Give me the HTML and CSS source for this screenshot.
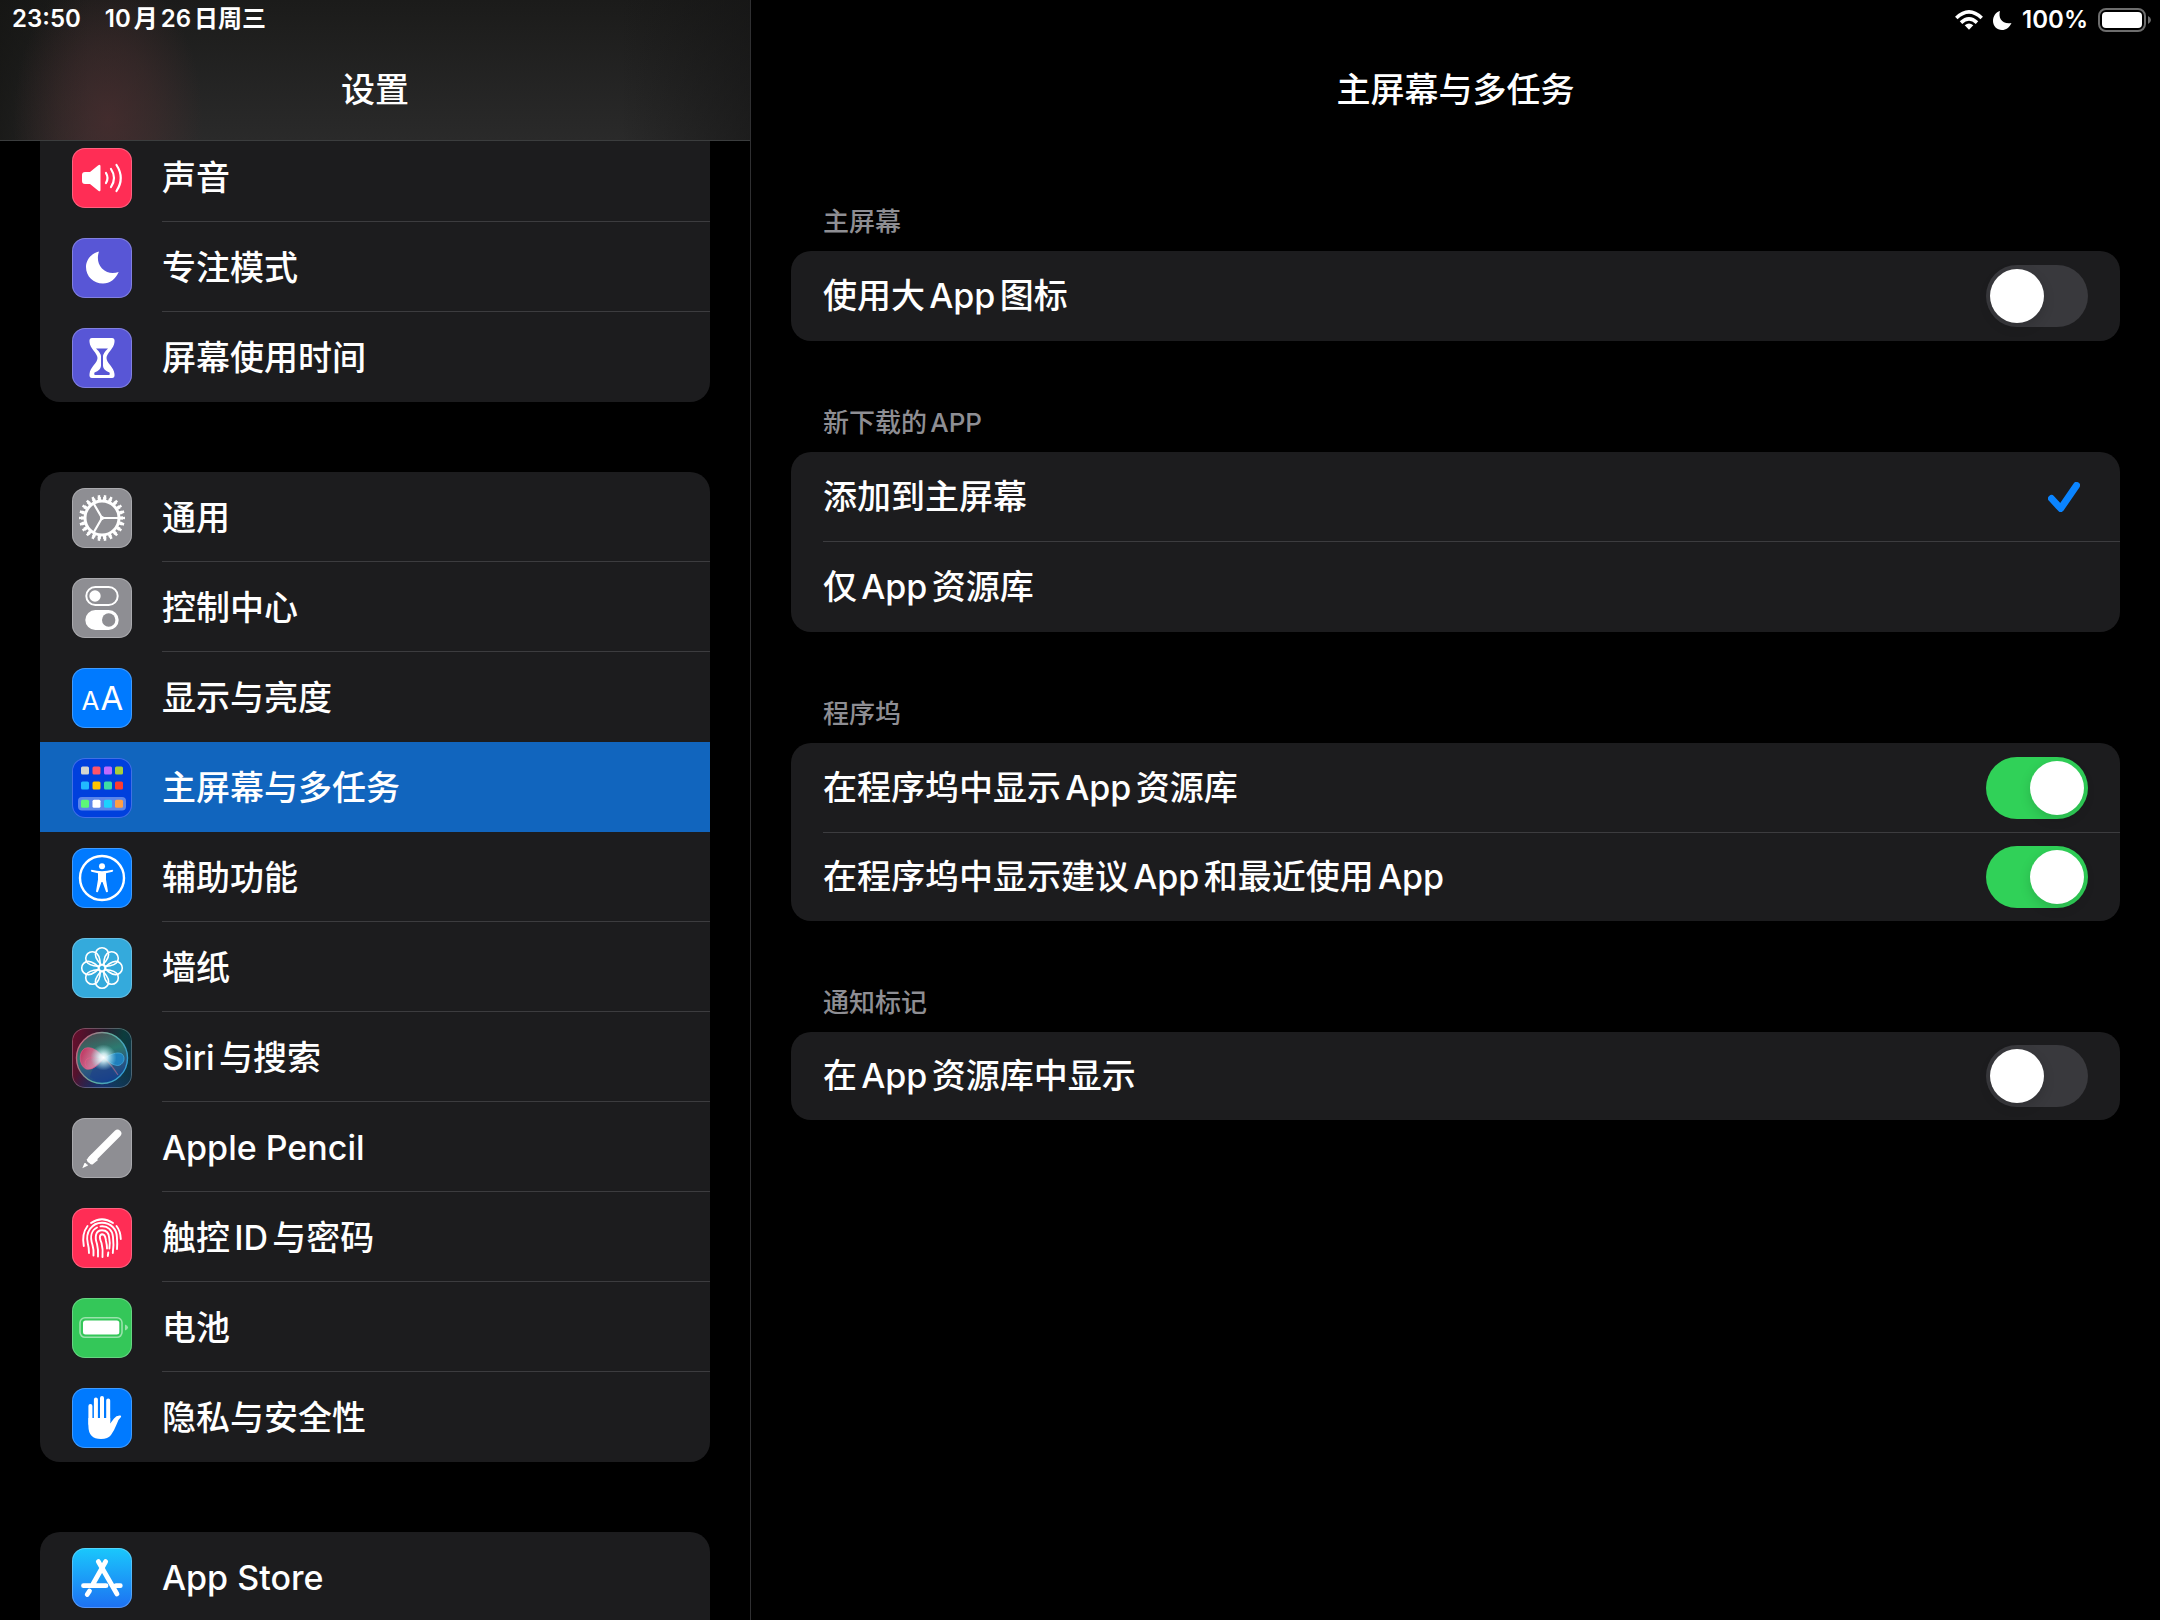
FILE: index.html
```html
<!DOCTYPE html>
<html lang="zh-CN">
<head>
  <meta charset="UTF-8">
  <meta name="viewport" content="width=device-width, initial-scale=1">
  <title>设置</title>
  <link rel="stylesheet" href="styles.css">
</head>
<body>
  <aside class="sidebar">
    <header class="sidebar-header">
      <div class="status-bar">
        <span>23:50</span>
        <span>10月26日周三</span>
      </div>
      <h1 class="title">设置</h1>
    </header>

    <nav class="menu">
      <div class="group cut-top">
        <a class="item" href="#">
          <svg class="icon red" viewBox="0 0 60 60">
            <path fill="#fff" d="M10 27q0-3 3-3h5l8.300-6.700q2.200-1.500 2.200 1v23.400q0 2.500-2.200 1L18 36h-5q-3 0-3-3z"/>
            <path class="line" stroke-width="2.200" d="M34 25q3 5 0 10M39 21q6 9 0 18M44.500 17q8.500 13 0 26"/>
          </svg>
          <span class="label">声音</span>
        </a>
        <a class="item" href="#">
          <svg class="icon purple" viewBox="0 0 60 60">
            <path fill="#fff" d="M27 13.500C25 19 25.500 26 30 30.500C35 35.500 41 36 46.700 34C43.500 41 38 45.500 31 45.500C21.500 45.500 14 38.500 14 29C14 22 19 15.500 27 13.500z"/>
          </svg>
          <span class="label">专注模式</span>
        </a>
        <a class="item" href="#">
          <svg class="icon purple" viewBox="0 0 60 60">
            <path fill="#fff" d="M20 10h20q3 0 2.500 4C42 21 34.500 25 34.500 30S42 39 42.500 46q.5 4-2.500 4H20q-3 0-2.500-4C18 39 25.500 35 25.500 30S18 21 17.500 14q-.5-4 2.500-4z"/>
            <path fill="#5856d6" d="M24 20.500h12Q31.200 25 31 28v10q.3 4 6.500 6.500q1 2.300-.5 2.500H23q-1.500-.2-.5-2.500Q28.700 42 29 38V28Q28.800 25 24 20.500z"/>
          </svg>
          <span class="label">屏幕使用时间</span>
        </a>
      </div>

      <div class="group">
        <a class="item" href="#">
          <svg class="icon gray" viewBox="0 0 60 60">
            <g fill="none" stroke="#fff">
              <circle cx="30" cy="30" r="17" stroke-width="3"/>
              <circle cx="30" cy="30" r="19.500" stroke-width="3" pathLength="220" stroke-dasharray="6 4" stroke-dashoffset="3"/>
              <circle cx="30" cy="30" r="21.500" stroke-width="3" pathLength="220" stroke-dasharray="4 6" stroke-dashoffset="2"/>
              <path stroke-width="2.200" d="M47 30H30L21.500 15.300M30 30L21.500 44.700"/>
            </g>
            <circle cx="30" cy="30" r="2" fill="#fff"/>
          </svg>
          <span class="label">通用</span>
        </a>
        <a class="item" href="#">
          <svg class="icon gray" viewBox="0 0 60 60">
            <rect x="14.300" y="9" width="31.400" height="18" rx="9" fill="none" stroke="#fff" stroke-width="2"/>
            <circle cx="23" cy="18" r="5.700" fill="#fff"/>
            <rect x="13.300" y="32" width="33.400" height="20" rx="10" fill="#fff"/>
            <circle cx="36.700" cy="42" r="6.700" fill="#8e8e93"/>
          </svg>
          <span class="label">控制中心</span>
        </a>
        <a class="item no-line" href="#">
          <svg class="icon blue" viewBox="0 0 60 60">
            <text class="icon-text" x="9.500" y="42" font-size="26">A</text>
            <text class="icon-text" x="28.500" y="42" font-size="33">A</text>
          </svg>
          <span class="label">显示与亮度</span>
        </a>
        <a class="item selected no-line" href="#" aria-current="page">
          <svg class="icon home" viewBox="0 0 60 60">
            <rect x="6" y="39" width="48" height="13.500" rx="4" fill="#5b86ea"/>
            <rect x="9" y="8.500" width="8" height="8" rx="1.500" fill="#d5d5cf"/>
            <rect x="20.500" y="8.500" width="8" height="8" rx="1.500" fill="#ff5468"/>
            <rect x="32" y="8.500" width="8" height="8" rx="1.500" fill="#bf6bff"/>
            <rect x="43" y="8.500" width="8" height="8" rx="1.500" fill="#a9cf38"/>
            <rect x="9" y="23.500" width="8" height="8" rx="1.500" fill="#21b8ff"/>
            <rect x="20.500" y="23.500" width="8" height="8" rx="1.500" fill="#ffc400"/>
            <rect x="32" y="23.500" width="8" height="8" rx="1.500" fill="#3ddba5"/>
            <rect x="43" y="23.500" width="8" height="8" rx="1.500" fill="#ff3b30"/>
            <rect x="9" y="41.700" width="8" height="8" rx="1.500" fill="#5df777"/>
            <rect x="20.500" y="41.700" width="8" height="8" rx="1.500" fill="#fff"/>
            <rect x="32" y="41.700" width="8" height="8" rx="1.500" fill="#1cd2ff"/>
            <rect x="43" y="41.700" width="8" height="8" rx="1.500" fill="#ff9f45"/>
          </svg>
          <span class="label">主屏幕与多任务</span>
        </a>
        <a class="item" href="#">
          <svg class="icon blue" viewBox="0 0 60 60">
            <circle class="line" cx="30" cy="30" r="22" stroke-width="2.400"/>
            <circle cx="30" cy="18.300" r="3" fill="#fff"/>
            <path fill="#fff" d="M19.500 21.800Q30 24.500 40.500 21.800q1.500.8 0 2L34 25.300v6.200l2 12q-.8 1.500-2 .3L30.500 34h-1L26 43.800q-1.200 1.200-2-.3l2-12v-6.200l-6.500-1.500q-1.500-1.200 0-2z"/>
          </svg>
          <span class="label">辅助功能</span>
        </a>
        <a class="item" href="#">
          <svg class="icon cyan" viewBox="0 0 60 60">
            <defs>
              <path id="petal" d="M30 27C27.500 25.500 23.400 20.500 23.400 16.300A6.600 6.600 0 0 1 36.600 16.300C36.600 20.500 32.500 25.500 30 27z"/>
            </defs>
            <g fill="none" stroke="#fff" stroke-width="1.600">
              <use href="#petal"/>
              <use href="#petal" transform="rotate(45 30 30)"/>
              <use href="#petal" transform="rotate(90 30 30)"/>
              <use href="#petal" transform="rotate(135 30 30)"/>
              <use href="#petal" transform="rotate(180 30 30)"/>
              <use href="#petal" transform="rotate(225 30 30)"/>
              <use href="#petal" transform="rotate(270 30 30)"/>
              <use href="#petal" transform="rotate(315 30 30)"/>
              <circle cx="30" cy="30" r="3.300"/>
            </g>
          </svg>
          <span class="label">墙纸</span>
        </a>
        <a class="item" href="#">
          <svg class="icon siri" viewBox="0 0 60 60">
            <defs>
              <linearGradient id="ring" x1="0" y1="0.300" x2="1" y2="0.700">
                <stop offset="0" stop-color="#c8607c"/>
                <stop offset="0.500" stop-color="#5fae9c"/>
                <stop offset="1" stop-color="#2f9bd8"/>
              </linearGradient>
              <linearGradient id="orb" x1="0.300" y1="0" x2="0.600" y2="1">
                <stop offset="0" stop-color="#4a4a50"/>
                <stop offset="0.400" stop-color="#2c7a70"/>
                <stop offset="0.700" stop-color="#2c5680"/>
                <stop offset="1" stop-color="#0e3f8c"/>
              </linearGradient>
              <linearGradient id="pink" x1="0" y1="0" x2="1" y2="0.400">
                <stop offset="0" stop-color="#d81e55"/>
                <stop offset="1" stop-color="#e8a8c0"/>
              </linearGradient>
              <radialGradient id="glow">
                <stop offset="0" stop-color="#fff"/>
                <stop offset="0.300" stop-color="#e6fdff" stop-opacity="0.850"/>
                <stop offset="1" stop-color="#9fe9f0" stop-opacity="0"/>
              </radialGradient>
            </defs>
            <circle cx="30" cy="30" r="25.500" fill="url(#orb)" stroke="url(#ring)" stroke-width="1.400"/>
            <path fill="#1d3f8a" fill-opacity="0.600" d="M30 32C24 34 19 43 18 49Q31 58 43 48C41 40 36 34 30 32z"/>
            <path fill="url(#pink)" fill-opacity="0.850" stroke="#f05a8a" stroke-width="0.600" d="M32 30C27 23 19 17.500 12.500 20.500C6 25 7 37.500 14 41C21 43 27 35 32 30z"/>
            <path fill="none" stroke="#f05a8a" stroke-width="0.700" stroke-opacity="0.800" d="M31 31C24 31 20 28 15 31C11 35 14 40 18 40.500C24 40 28 35 31 31z"/>
            <path fill="#1f86c8" fill-opacity="0.850" stroke="#49bdf0" stroke-width="0.600" d="M32 30C38 27 45 23 50 26C54.500 30 51 37.500 45.500 37.500C39 37 36 32 32 30z"/>
            <path fill="none" stroke="#c06a94" stroke-width="1.200" stroke-opacity="0.600" d="M32 30Q39 36 46 47"/>
            <circle cx="31.500" cy="29.500" r="13" fill="url(#glow)"/>
          </svg>
          <span class="label">Siri与搜索</span>
        </a>
        <a class="item" href="#">
          <svg class="icon gray" viewBox="0 0 60 60">
            <path fill="none" stroke="#fff" stroke-width="7.600" stroke-linecap="round" d="M45.500 15.500L20 41"/>
            <path fill="#fff" d="M14.600 41.500L20 36l6 6-5.500 4.500q-2 .2-2.500-.8t-1.500-1.200-1.900-3z"/>
            <path fill="#fff" d="M10.300 50.300L12.500 45q1.800-.2 2 1.200 1.200 0 1.500 1.300z"/>
          </svg>
          <span class="label">Apple Pencil</span>
        </a>
        <a class="item" href="#">
          <svg class="icon red" viewBox="0 0 60 60">
            <g class="line" stroke-width="1.900">
              <path d="M19 15Q30 7.500 41 15"/>
              <path d="M15.500 18Q9.500 26 11.800 38"/>
              <path d="M44.500 18Q48.500 23 48.800 31"/>
              <path d="M17 45Q17 40 15.800 35.500C13 24 20 14.700 30 14.700C39 14.700 44.700 21.500 44.900 29Q45.500 36 45 41"/>
              <path d="M21.500 47.500Q22 42 20.500 37C17.500 28 20 22 25 19.500"/>
              <path d="M28.500 18.400C36 17.500 40.500 22.500 41 29Q42 37 40.800 45"/>
              <path d="M26 48.500Q26.500 42 25 36C22.500 29 23.500 22.300 30 22.300C35 22.300 37 26 37.200 30Q38.200 34 37.400 40.500"/>
              <path d="M30.500 49Q31.200 41 29.500 35C28 31.500 26.500 27 30 26.200C33.500 26 33.500 30 34 33Q35 37 35 40.500"/>
              <path d="M36.300 44.500L35.800 48"/>
            </g>
          </svg>
          <span class="label">触控ID与密码</span>
        </a>
        <a class="item" href="#">
          <svg class="icon green" viewBox="0 0 60 60">
            <rect x="8" y="19.800" width="42" height="19.500" rx="5" fill="none" stroke="#fff" stroke-opacity="0.500" stroke-width="1.600"/>
            <rect x="11" y="22.500" width="36.300" height="14" rx="2.500" fill="#fff"/>
            <path fill="#fff" fill-opacity="0.500" d="M53 26.500q3 1 3 3t-3 3z"/>
          </svg>
          <span class="label">电池</span>
        </a>
        <a class="item" href="#">
          <svg class="icon blue" viewBox="0 0 60 60">
            <g fill="none" stroke="#fff" stroke-linecap="round" stroke-width="4">
              <path d="M18.400 18V36M23.900 11.500V34M30 10V34M36.200 12.500V34"/>
            </g>
            <path fill="#fff" d="M16.400 30H38.200V35.500L42 30.500Q44.500 27 48.500 27.500Q49.700 28.200 48.800 29.200Q46.500 31 45 35.500Q42 43 39 47Q36 51 29 51Q16.400 51 16.400 38z"/>
          </svg>
          <span class="label">隐私与安全性</span>
        </a>
      </div>

      <div class="group cut-bottom">
        <a class="item" href="#">
          <svg class="icon store" viewBox="0 0 60 60">
            <g fill="none" stroke="#fff" stroke-width="4.800" stroke-linecap="round">
              <path d="M33.700 13.500L21 36M26.300 13.500L45 46M11.500 37.700H34M44 37.700H48.300M17.500 43L15.200 46.500"/>
            </g>
          </svg>
          <span class="label">App Store</span>
        </a>
      </div>
    </nav>
  </aside>

  <main class="content">
    <header>
      <div class="status-bar status-right">
        <svg class="wifi" viewBox="0 0 28 20">
          <g fill="none" stroke="#fff" stroke-width="3.600">
            <path d="M1.300 8Q14-4.200 26.700 8"/>
            <path d="M6 12.600Q14 5.200 22 12.600"/>
          </g>
          <path fill="#fff" d="M9.700 15.200Q14 11.700 18.300 15.200L14 19.700z"/>
        </svg>
        <svg class="moon" viewBox="0 0 19 19">
          <path fill="#fff" d="M7 0C5 7 9 13.500 18.500 12C16.500 16.500 13 19 9 19C4 19 0 15 0 10C0 5 3 1.200 7 0z"/>
        </svg>
        <span>100%</span>
        <svg class="battery" viewBox="0 0 54 24">
          <rect x="1" y="1" width="46" height="22" rx="7" fill="none" stroke="#6d6d6d" stroke-width="2"/>
          <rect x="4" y="4" width="40" height="16" rx="4" fill="#fff"/>
          <path fill="#6d6d6d" d="M50 8q3 1.500 3 4t-3 4z"/>
        </svg>
      </div>
      <h2 class="title">主屏幕与多任务</h2>
    </header>

    <section>
      <h3 class="section-title">主屏幕</h3>
      <div class="card">
        <div class="row">
          <label for="big-icons">使用大App图标</label>
          <input class="switch" type="checkbox" id="big-icons">
        </div>
      </div>
    </section>

    <section>
      <h3 class="section-title">新下载的APP</h3>
      <div class="card">
        <div class="row">
          <label for="add-home">添加到主屏幕</label>
          <input class="choice" type="radio" name="new-app" id="add-home" checked>
          <svg class="check" viewBox="0 0 32 30"><path d="M3.500 16.500L12.700 26.500L28.500 3.500"/></svg>
        </div>
        <div class="row">
          <label for="library-only">仅App资源库</label>
          <input class="choice" type="radio" name="new-app" id="library-only">
          <svg class="check" viewBox="0 0 32 30"><path d="M3.500 16.500L12.700 26.500L28.500 3.500"/></svg>
        </div>
      </div>
    </section>

    <section>
      <h3 class="section-title">程序坞</h3>
      <div class="card">
        <div class="row">
          <label for="dock-library">在程序坞中显示App资源库</label>
          <input class="switch" type="checkbox" id="dock-library" checked>
        </div>
        <div class="row compact">
          <label for="dock-recent">在程序坞中显示建议App和最近使用App</label>
          <input class="switch" type="checkbox" id="dock-recent" checked>
        </div>
      </div>
    </section>

    <section>
      <h3 class="section-title">通知标记</h3>
      <div class="card">
        <div class="row compact">
          <label for="badges">在App资源库中显示</label>
          <input class="switch" type="checkbox" id="badges">
        </div>
      </div>
    </section>
  </main>
</body>
</html>
```

FILE: styles.css
```css
* {
  box-sizing: border-box;
}

body, h1, h2, h3 {
  margin: 0;
  padding: 0;
}

body {
  display: flex;
  height: 100vh;
  overflow: hidden;
  background-color: #000;
  color: #fff;
  font-family: Inter, "Noto Sans CJK SC", sans-serif;
  font-size: 34px;
  font-weight: 500;
  text-autospace: normal;
}

a {
  color: inherit;
  text-decoration: none;
}

/* sidebar */

.sidebar {
  display: flex;
  flex-direction: column;
  flex: 0 0 751px;
  border-right: 1px solid #2f2f31;
}

.sidebar-header {
  flex: none;
  border-bottom: 1px solid #3b3d3e;
  background:
    radial-gradient(ellipse 95px 150px at 108px 120px, rgba(80, 46, 48, 0.65), rgba(76, 46, 47, 0.4) 50%, transparent),
    linear-gradient(to right, rgba(20, 20, 18, 0.7), transparent 90px, transparent 620px, rgba(20, 20, 20, 0.6)),
    linear-gradient(#1b1b1a, #2a2a2a);
}

.status-bar {
  display: flex;
  align-items: baseline;
  gap: 24px;
  height: 40px;
  padding: 0 12px;
  font-size: 24px;
  font-weight: 600;
  line-height: 38px;
}

.title {
  font-size: 34px;
  font-weight: 500;
  line-height: 100px;
  text-align: center;
}

.menu {
  flex: 1;
  overflow: hidden;
  padding: 0 40px;
}

.group {
  margin-bottom: 70px;
  border-radius: 20px;
  background-color: #1c1c1e;
  overflow: hidden;
}

/* scrolled partly under the header */
.cut-top {
  margin-top: -9px;
  border-radius: 0 0 20px 20px;
}

/* runs on below the window */
.cut-bottom {
  margin-bottom: 0;
  border-radius: 20px 20px 0 0;
}

.item {
  display: flex;
  align-items: center;
  gap: 30px;
  height: 90px;
  padding: 2px 0 0 32px;
}

.label {
  flex: 1;
  height: 88px;
  line-height: 88px;
  border-bottom: 1px solid #3c3c3f;
}

.item:last-child .label,
.no-line .label {
  border-bottom-color: transparent;
}

.selected {
  background-color: #1165be;
}

.icon {
  flex: none;
  width: 60px;
  height: 60px;
  border-radius: 13px;
  box-shadow: inset 0 0 0 1px rgba(255, 255, 255, 0.25);
}

.icon .line {
  fill: none;
  stroke: #fff;
  stroke-linecap: round;
}

.icon-text {
  fill: #fff;
  font-family: Inter, sans-serif;
  font-weight: 400;
}

.red {
  background-color: #ff2d55;
}

.purple {
  background-color: #5856d6;
}

.gray {
  background-color: #8e8e93;
}

.blue {
  background-color: #007aff;
}

.cyan {
  background-color: #34aadc;
}

.green {
  background-color: #34c759;
}

.home {
  background-color: #0040dd;
}

.siri {
  background:
    radial-gradient(circle at 50% 110%, #16357c, transparent 45%),
    linear-gradient(100deg, #6d0d2c, #2a1a2c 45%, #0c3c3c 75%, #10304a);
}

.store {
  background: linear-gradient(#1ac8fc, #1d70f2);
}

/* content */

.content {
  flex: 1;
  min-width: 0;
  padding: 0 40px;
}

.status-right {
  align-items: center;
  justify-content: flex-end;
  gap: 10px;
  margin-right: -32px;
  padding: 0;
}

.wifi {
  width: 28px;
  height: 20px;
}

.moon {
  width: 19px;
  height: 19px;
}

.battery {
  width: 54px;
  height: 24px;
}

.section-title {
  height: 111px;
  padding: 67px 32px 0;
  color: #8e8e93;
  font-size: 26px;
  font-weight: 500;
  line-height: 30px;
}

.card {
  border-radius: 20px;
  background-color: #1c1c1e;
}

.row {
  display: flex;
  align-items: center;
  height: 90px;
  margin-left: 32px;
  padding-right: 32px;
}

.row:not(:last-child) {
  border-bottom: 1px solid #3c3c3f;
}

.compact {
  height: 88px;
}

.row label {
  flex: 1;
  line-height: 88px;
}

.switch {
  appearance: none;
  width: 102px;
  height: 62px;
  margin: 0;
  padding: 4px;
  border-radius: 31px;
  background-color: #39393d;
  cursor: pointer;
}

.switch::before {
  content: "";
  display: block;
  width: 54px;
  height: 54px;
  border-radius: 50%;
  background-color: #fff;
  box-shadow: 0 4px 12px rgba(0, 0, 0, 0.15);
}

.switch:checked {
  background-color: #30d158;
}

.switch:checked::before {
  margin-left: auto;
}

.choice {
  appearance: none;
  width: 0;
  height: 0;
  margin: 0;
}

.check {
  display: none;
  width: 32px;
  height: 30px;
  margin-right: 8px;
  fill: none;
  stroke: #0a84ff;
  stroke-width: 7;
  stroke-linecap: round;
  stroke-linejoin: round;
}

.choice:checked + .check {
  display: block;
}
```
